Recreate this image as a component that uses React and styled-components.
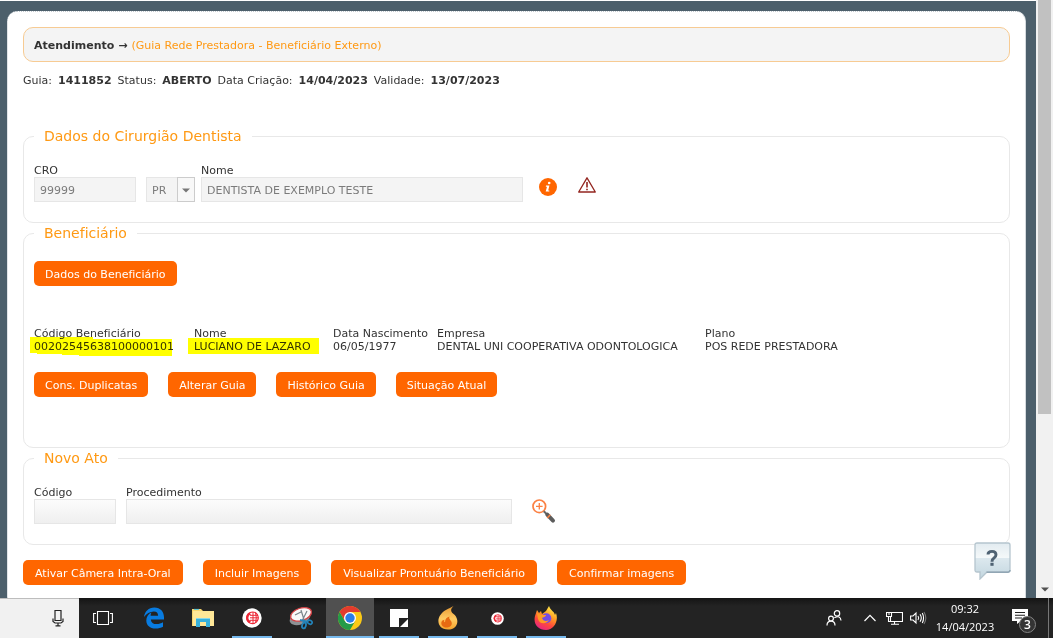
import React from "react";
import styled, { createGlobalStyle } from "styled-components";

const GlobalStyle = createGlobalStyle`
  * { box-sizing: border-box; }
  body { margin: 0; background: #4c5f6b; }
  body, button, input, select {
    font-family: "DejaVu Sans", Verdana, sans-serif;
    font-size: 11px;
    font-variant-ligatures: none;
    line-height: 13px;
    color: #333;
  }
`;

const Desktop = styled.div`
  display: grid;
  grid-template-rows: minmax(0, 1fr) 40px;
  height: 100vh;
`;

const Browser = styled.div`
  display: flex;
  min-height: 0;
`;

const Viewport = styled.div`
  position: relative;
  flex: 1;
  min-width: 0;
  overflow: hidden;
  padding: 10px 10px 0 7px;
  border-top: 1px solid #fff;
  background: #4c5f6b;
`;

const Sheet = styled.main`
  min-height: 100%;
  padding: 15px 15px 13px;
  border: 1px dotted #c3cad0;
  border-right: 1px solid #d5dade;
  border-bottom: 0;
  border-radius: 10px 10px 0 0;
  background: #fff;
`;

const TitleBar = styled.h1`
  display: flex;
  align-items: center;
  gap: 4px;
  height: 35px;
  margin: 0;
  padding: 2px 10px 0;
  border: 1px solid #f7cb93;
  border-radius: 10px;
  background: #f4f4f4;
  font-size: 11px;
`;

const Crumb = styled.span`
  color: #ff9913;
  font-weight: 400;
`;

const StatusLine = styled.p`
  display: flex;
  gap: 6px;
  margin: 12px 0 41px;
`;

const Group = styled.fieldset`
  min-width: 0;
  margin: 0 0 ${(p) => p.$after || 2}px;
  padding: 19px 10px ${(p) => p.$bottom || 20}px;
  border: 1px solid #e8e8e8;
  border-radius: 10px;
`;

const Legend = styled.legend`
  padding: 0 10px;
  color: #ff9913;
  font-size: 14px;
  line-height: 17px;
`;

const FieldRow = styled.div`
  display: flex;
  align-items: flex-end;
`;

const Field = styled.label`
  display: block;
  width: ${(p) => p.$width}px;
  margin-right: ${(p) => p.$after || 0}px;
`;

const TextBox = styled.input`
  display: block;
  width: 100%;
  height: 25px;
  padding: 2px 5px 0;
  border: 1px solid #e6e6e6;
  border-radius: 0;
  background: ${(p) => (p.disabled ? "#f4f4f4" : "linear-gradient(#fcfcfc, #efefef)")};
  color: #7b7b7b;
`;

const SelectFrame = styled.div`
  position: relative;
  width: 49px;
  margin-right: 6px;
`;

const Select = styled.select`
  display: block;
  appearance: none;
  width: 100%;
  height: 25px;
  padding: 2px 20px 0 5px;
  border: 1px solid #e6e6e6;
  border-radius: 0;
  background: #f4f4f4;
  color: #7b7b7b;
  opacity: 1;
`;

const SelectArrow = styled.span`
  position: absolute;
  inset: 0 0 0 auto;
  display: grid;
  place-items: center;
  width: 18px;
  padding-top: 2px;
  border: 1px solid #ccc;
  background: #f8f8f8;
  pointer-events: none;
`;

const IconButton = styled.button`
  display: block;
  height: 25px;
  padding: 0;
  border: 0;
  background: none;
  margin-left: ${(p) => p.$before || 0}px;

  svg { display: block; }
`;

const ActionRow = styled.div`
  display: flex;
  gap: 20px;
`;

const Action = styled.button`
  height: 25px;
  padding: ${(p) => (p.$wide ? "2px 12px 0" : "1px 11px 0")};
  border: 0;
  border-radius: 5px;
  background: #ff6600;
  color: #fff;
  white-space: nowrap;
`;

const Patient = styled.table`
  margin: 41px 0 19px;
  border-collapse: collapse;
  table-layout: fixed;
  width: 820px;

  th, td {
    padding: 0;
    font-weight: 400;
    text-align: left;
    white-space: nowrap;
  }
`;

const Marked = styled.span`
  position: relative;
`;

const MarkerInk = styled.svg`
  position: absolute;
  left: -6px;
  top: -3px;
  mix-blend-mode: multiply;
`;

const HelpButton = styled.button`
  position: absolute;
  right: 25px;
  bottom: 18px;
  padding: 0;
  border: 0;
  background: none;

  svg { display: block; }
`;

const ScrollTrack = styled.div`
  display: flex;
  flex-direction: column;
  justify-content: space-between;
  align-items: center;
  width: 17px;
  padding-bottom: 6px;
  background: #f1f1f1;
`;

const ScrollThumb = styled.div`
  width: 13px;
  height: 70%;
  background: #c1c1c1;
`;

const Taskbar = styled.footer`
  display: flex;
  background: linear-gradient(#141414, #232323 8px);
  color: #fff;
`;

const SearchEnd = styled.div`
  display: flex;
  align-items: center;
  justify-content: flex-end;
  width: 79px;
  padding-right: 15px;
  border-top: 1px solid #bdbdbd;
  background: #f1f1f1;
`;

const TaskList = styled.nav`
  display: flex;
  flex: 1;
  gap: 1px;
`;

const Task = styled.button`
  display: grid;
  place-items: center;
  width: 48px;
  padding: 0;
  margin-right: ${(p) => p.$after || 0}px;
  border: 0;
  background: ${(p) => (p.$active ? "#505050" : "none")};
  background-image: ${(p) => (p.$open || p.$active ? "linear-gradient(#76b9ed, #76b9ed)" : "none")};
  background-repeat: no-repeat;
  background-position: center bottom;
  background-size: ${(p) => (p.$active ? 48 : 40)}px 2px;
`;

const Tray = styled.div`
  display: flex;
  align-items: center;
  padding-right: 4px;
`;

const TrayButton = styled.button`
  display: grid;
  place-items: center;
  width: ${(p) => p.$width}px;
  height: 40px;
  padding: ${(p) => p.$drop || 0}px 0 0;
  border: 0;
  background: none;
`;

const Clock = styled.time`
  width: 70px;
  font-family: "Open Sans", "Noto Sans", sans-serif;
  font-size: 11px;
  line-height: 18px;
  text-align: center;
`;

const DesktopEdge = styled.span`
  width: 1px;
  height: 40px;
  background: #777;
`;

const InfoIcon = () => (
  <svg width="18" height="25" viewBox="0 0 18 25">
    <circle cx="9" cy="10" r="9" fill="#ff6600" />
    <circle cx="10.2" cy="6" r="1.3" fill="#fff" />
    <path d="M7 8.5H10.4L9.2 13.4H10.3V14.6H6.7L8 9.7H6.8Z" fill="#fff" />
  </svg>
);

const AlertIcon = () => (
  <svg width="18" height="25" viewBox="0 0 18 25" fill="none" stroke="#93251f">
    <path d="M9 .8L17.3 15H.7Z" strokeWidth="1.3" strokeLinejoin="round" />
    <path d="M9 5V10.5M9 11.8V13.3" strokeWidth="1.6" />
  </svg>
);

const MagnifierIcon = () => (
  <svg width="24" height="25" viewBox="0 0 24 25" fill="none">
    <circle cx="7.3" cy="7.3" r="6.3" stroke="#fb8144" strokeWidth="1.7" />
    <path d="M4 7.3H10.6M7.3 4V10.6" stroke="#fb8144" strokeWidth="1.3" />
    <path d="M11.8 12.2L15 15.4" stroke="#656565" strokeWidth="2" />
    <path d="M15.3 15.7L21 21.6" stroke="#5c5c5c" strokeWidth="4" strokeLinecap="round" />
    <path d="M18.3 15.8L15.2 19" stroke="#fb8144" strokeWidth="1.5" />
  </svg>
);

const HelpIcon = () => (
  <svg width="37" height="38" viewBox="0 0 37 38">
    <defs>
      <linearGradient id="bubble" x1="0" y1="0" x2="0" y2="1">
        <stop offset="0" stopColor="#e2ebf0" />
        <stop offset=".42" stopColor="#f5f9fa" />
        <stop offset=".43" stopColor="#dce8ee" />
        <stop offset="1" stopColor="#c2d6df" />
      </linearGradient>
    </defs>
    <path
      d="M3 1H34Q36 1 36 3V28Q36 30 34 30H13L6 37V30H3Q1 30 1 28V3Q1 1 3 1Z"
      fill="url(#bubble)"
      stroke="#b5c5ce"
      strokeWidth="1.3"
    />
    <path d="M12.5 30.2H34Q36 30 36 28" fill="none" stroke="#91a6b4" strokeWidth="1.4" />
    <path
      d="M14 12.6Q14 9.4 18 9.4Q22 9.4 22 12.7Q22 14.6 20 16Q18 17.3 18 19.7"
      fill="none"
      stroke="#4f6273"
      strokeWidth="2.9"
    />
    <rect x="16.4" y="20.8" width="3.2" height="3" fill="#4f6273" />
  </svg>
);

const Arrow = ({ fill }) => (
  <svg width="8" height="5" viewBox="0 0 8 5">
    <path d="M0 .5H8L4 4.5Z" fill={fill} />
  </svg>
);

const MicIcon = () => (
  <svg width="12" height="18" viewBox="0 0 12 18" fill="none" stroke="#222" strokeWidth="1.2">
    <path d="M3 .5H9V10.5H3ZM1 8.5V11.5L3 13H9L11 11.5V8.5M6 13V15.5M3.5 15.8H8.5" />
  </svg>
);

const TaskViewIcon = () => (
  <svg width="20" height="16" viewBox="0 0 20 16" fill="none" stroke="#fff" strokeWidth="1.1">
    <path d="M4.5 1.5H15.5V14.5H4.5ZM3 3.5H.6V12.5H3M17 3.5H19.4V12.5H17" />
  </svg>
);

const EdgeIcon = () => (
  <svg width="22" height="22" viewBox="0 0 22 22">
    <path
      d="M1 10C1.7 4.2 5.7.4 11.3.4C17.5.4 21 4.7 21 10.2V12.4H7.8C8 15.5 10.3 17.1 13.6 17.1C16 17.1 18.2 16.4 20 15.3V19.8C18 20.9 15.5 21.6 12.6 21.6C6.9 21.6 3.3 18.3 3.3 13.5C3.3 9.8 5.2 7 8.5 5.5C7.9 6.4 7.6 7.4 7.6 8.7H15.1C15.1 6 13.7 4.5 10.8 4.5C7 4.5 3.4 6.6 1 10Z"
      fill="#087be0"
    />
  </svg>
);

const FolderIcon = () => (
  <svg width="22" height="20" viewBox="0 0 22 20">
    <path d="M0 1H9L11 3H22V18H0Z" fill="#f8d56d" />
    <path d="M1 3H22V18H1Z" fill="#ffe797" />
    <path d="M2 1.4H7" stroke="#4fc1dc" strokeWidth="1" />
    <path d="M4 10H18V19H14V14H8V19H4Z" fill="#38b1dc" />
    <path d="M4 10H18V11H4Z" fill="#8bd8e8" />
  </svg>
);

const GlobeBadge = ({ size }) => (
  <svg width={size} height={size} viewBox="0 0 20 20" fill="none" stroke="#ed2736">
    <circle cx="10" cy="10" r="9.7" fill="#fff" stroke="none" />
    <circle cx="10.5" cy="9.8" r="5.8" strokeWidth="1.2" />
    <path d="M11 4V15.6M8 7.3H16M8 9.8H16.3M8 12.3H16M13.6 5Q15 9.8 13.6 14.6" />
    <path d="M7.4 4.4C3 6.5 3 13 7.4 15.2L9 13L7 12Q5.8 9.8 7 7.6L9 6.6Z" fill="#ed2736" stroke="none" />
  </svg>
);

const SnipIcon = () => (
  <svg width="24" height="24" viewBox="0 0 24 24" fill="none">
    <ellipse cx="11" cy="12" rx="10.8" ry="6.4" fill="#8d9295" transform="rotate(-22 11 12)" />
    <ellipse cx="12" cy="8.4" rx="10.8" ry="6.2" fill="#f8f8f8" stroke="#d44144" strokeWidth="1.3" transform="rotate(-18 12 8.4)" />
    <path d="M6 9L12 6M12 4L15.4 15M18 5L13 15" stroke="#7a858b" strokeWidth="1.2" />
    <path d="M11 14L19 16" stroke="#2384bb" strokeWidth="2" />
    <ellipse cx="15" cy="19.5" rx="1.9" ry="2.9" stroke="#2384bb" strokeWidth="1.8" transform="rotate(15 15 19.5)" />
    <ellipse cx="20.8" cy="16.2" rx="2.4" ry="1.8" stroke="#2384bb" strokeWidth="1.7" transform="rotate(28 20.8 16.2)" />
  </svg>
);

const ChromeIcon = () => (
  <svg width="24" height="24" viewBox="0 0 24 24">
    <circle cx="12" cy="12" r="12" fill="#fbc916" />
    <path d="M1.6 6A12 12 0 0 1 22.4 6H12L7 15Z" fill="#e33b2e" />
    <path d="M1.6 6A12 12 0 0 0 12 24L17.2 15L12 17L6.8 15Z" fill="#249b48" />
    <circle cx="12" cy="12" r="6" fill="#fff" />
    <circle cx="12" cy="12" r="4.7" fill="#2b7de9" />
  </svg>
);

const NotesIcon = () => (
  <svg width="18" height="18" viewBox="0 0 18 18">
    <path d="M0 0H18V18H0Z" fill="#fff" />
    <path d="M9 9H18V10L10 18H9Z" fill="#222" />
  </svg>
);

const FlameIcon = () => (
  <svg width="20" height="24" viewBox="0 0 20 24">
    <defs>
      <linearGradient id="flame" x1="0" y1="0" x2="0" y2="1">
        <stop offset="0" stopColor="#e99a32" />
        <stop offset=".55" stopColor="#ffcb63" />
        <stop offset="1" stopColor="#f5a32b" />
      </linearGradient>
    </defs>
    <path d="M15.5 0C11.5 4 13 6 16.8 9C22 15 19 23.5 10 23.5C.5 23.5-1.5 15 2 9.5C5.5 4 11 3 15.5 0Z" fill="url(#flame)" />
    <path d="M11.5 10.5C10 13 14 14.5 13.8 17.5C13.5 22.5 5 23 3.5 18.5C2.8 15.5 4.5 14 6.5 13.8C5.8 15 6 16 7 16.3C7 13 9 11 11.5 10.5Z" fill="#e66a12" />
  </svg>
);

const FirefoxIcon = () => (
  <svg width="24" height="24" viewBox="0 0 24 24">
    <defs>
      <linearGradient id="fox" x1=".8" y1="0" x2=".3" y2="1">
        <stop offset="0" stopColor="#fff44f" />
        <stop offset=".4" stopColor="#ff9c22" />
        <stop offset=".7" stopColor="#ff483d" />
        <stop offset="1" stopColor="#e62486" />
      </linearGradient>
    </defs>
    <path d="M3 4L5 7L7 5L8 8L12 5L15 0C17 5 20 5 21 9L22 7C25 15 20 24 12 24C4 24-1 18 1 10Z" fill="url(#fox)" />
    <circle cx="12.3" cy="12.3" r="5" fill="#754be4" />
    <path d="M3 7L8 9L12 9C12 11 9 11 8 12C9 15 12 16 15 14C12 19 5 18 4 13Z" fill="#ff9b24" />
  </svg>
);

const PeopleIcon = () => (
  <svg width="16" height="16" viewBox="0 0 16 16" fill="none" stroke="#fff" strokeWidth="1.2">
    <circle cx="11" cy="3.4" r="2.7" />
    <circle cx="5" cy="8.6" r="2.4" />
    <path d="M1 15.5Q1 11.2 5 11.2Q9 11.2 9 15.5M8.3 7.8Q14.5 4.8 15 10.5" />
  </svg>
);

const ChevronIcon = () => (
  <svg width="12" height="8" viewBox="0 0 12 8" fill="none" stroke="#fff" strokeWidth="1.2">
    <path d="M.5 7L6 1.4L11.5 7" />
  </svg>
);

const NetworkIcon = () => (
  <svg width="17" height="14" viewBox="0 0 17 14" fill="none" stroke="#fff">
    <path d="M6 1.5H16.5V10.5H4.5V6M.5 1.5H5.5V5.5H.5ZM2.5 5.5V10.5H5M8.5 10.5V13M5 13.2H13" strokeWidth="1.1" />
    <path d="M2 3H4" />
  </svg>
);

const VolumeIcon = () => (
  <svg width="17" height="14" viewBox="0 0 17 14" fill="none" stroke="#fff" strokeWidth="1.1">
    <path d="M.6 5H3L6 2V12L3 9H.6ZM8 5Q9.4 7 8 9M10 3.3Q12.6 7 10 10.7" />
    <path d="M12.3 2Q14.8 7 12.3 12" />
    <path d="M14 1Q17.6 7 14 13" stroke="#777" />
  </svg>
);

const NotificationIcon = () => (
  <svg width="25" height="25" viewBox="0 0 25 25">
    <path d="M0 1H16V13H9L5 16V13H0Z" fill="#fff" />
    <path d="M3 4.5H13M3 7.2H13M3 10H10" stroke="#222" strokeWidth="1.1" />
    <circle cx="15.5" cy="16.5" r="8" fill="#343434" stroke="#858585" />
    <text x="15.5" y="21" fill="#fff" fontFamily="Open Sans, sans-serif" fontSize="12" fontWeight="600" textAnchor="middle">3</text>
  </svg>
);

const bottomActions = [
  "Ativar Câmera Intra-Oral",
  "Incluir Imagens",
  "Visualizar Prontuário Beneficiário",
  "Confirmar imagens",
];
const guideActions = ["Cons. Duplicatas", "Alterar Guia", "Histórico Guia", "Situação Atual"];

export default function App() {
  return (
    <>
      <GlobalStyle />
      <Desktop>
        <Browser>
          <Viewport>
            <Sheet>
              <TitleBar>
                <span>Atendimento</span>
                <span>→</span>
                <Crumb>(Guia Rede Prestadora - Beneficiário Externo)</Crumb>
              </TitleBar>
              <StatusLine>
                <span>Guia:</span>
                <b>1411852</b>
                <span>Status:</span>
                <b>ABERTO</b>
                <span>Data Criação:</span>
                <b>14/04/2023</b>
                <span>Validade:</span>
                <b>13/07/2023</b>
              </StatusLine>

              <Group>
                <Legend>Dados do Cirurgião Dentista</Legend>
                <FieldRow>
                  <Field $width={102} $after={10}>
                    CRO
                    <TextBox disabled defaultValue="99999" />
                  </Field>
                  <SelectFrame>
                    <Select disabled aria-label="UF" defaultValue="PR">
                      <option>PR</option>
                    </Select>
                    <SelectArrow>
                      <Arrow fill="#777" />
                    </SelectArrow>
                  </SelectFrame>
                  <Field $width={322}>
                    Nome
                    <TextBox disabled defaultValue="DENTISTA DE EXEMPLO TESTE" />
                  </Field>
                  <IconButton $before={16} aria-label="Informações"><InfoIcon /></IconButton>
                  <IconButton $before={21} aria-label="Alerta"><AlertIcon /></IconButton>
                </FieldRow>
              </Group>

              <Group $bottom={50}>
                <Legend>Beneficiário</Legend>
                <ActionRow>
                  <Action>Dados do Beneficiário</Action>
                </ActionRow>
                <Patient>
                  <colgroup>
                    <col width="160" />
                    <col width="139" />
                    <col width="104" />
                    <col width="268" />
                    <col />
                  </colgroup>
                  <thead>
                    <tr>
                      <th>Código Beneficiário</th>
                      <th>Nome</th>
                      <th>Data Nascimento</th>
                      <th>Empresa</th>
                      <th>Plano</th>
                    </tr>
                  </thead>
                  <tbody>
                    <tr>
                      <td>
                        <Marked>
                          <MarkerInk width="146" height="20" viewBox="0 0 146 20">
                            <path d="M2 0H65V2H144V19H51V18H34V17H9V16H2Z" fill="#ff0" />
                          </MarkerInk>
                          00202545638100000101
                        </Marked>
                      </td>
                      <td>
                        <Marked>
                          <MarkerInk width="131" height="20" viewBox="0 0 131 20">
                            <path d="M0 1H131V17H0Z" fill="#ff0" />
                          </MarkerInk>
                          LUCIANO DE LAZARO
                        </Marked>
                      </td>
                      <td>06/05/1977</td>
                      <td>DENTAL UNI COOPERATIVA ODONTOLOGICA</td>
                      <td>POS REDE PRESTADORA</td>
                    </tr>
                  </tbody>
                </Patient>
                <ActionRow>
                  {guideActions.map((label) => <Action key={label}>{label}</Action>)}
                </ActionRow>
              </Group>

              <Group $after={15}>
                <Legend>Novo Ato</Legend>
                <FieldRow>
                  <Field $width={82} $after={10}>
                    Código
                    <TextBox />
                  </Field>
                  <Field $width={386}>
                    Procedimento
                    <TextBox />
                  </Field>
                  <IconButton $before={20} aria-label="Pesquisar procedimento"><MagnifierIcon /></IconButton>
                </FieldRow>
              </Group>

              <ActionRow>
                {bottomActions.map((label) => <Action $wide key={label}>{label}</Action>)}
              </ActionRow>
            </Sheet>
            <HelpButton aria-label="Ajuda"><HelpIcon /></HelpButton>
          </Viewport>
          <ScrollTrack>
            <ScrollThumb />
            <Arrow fill="#505050" />
          </ScrollTrack>
        </Browser>

        <Taskbar>
          <SearchEnd><MicIcon /></SearchEnd>
          <TaskList aria-label="Aplicativos">
            <Task $after={2} aria-label="Visão de tarefas"><TaskViewIcon /></Task>
            <Task aria-label="Edge"><EdgeIcon /></Task>
            <Task aria-label="Arquivos"><FolderIcon /></Task>
            <Task $open aria-label="Discador"><GlobeBadge size={20} /></Task>
            <Task aria-label="Ferramenta de captura"><SnipIcon /></Task>
            <Task $active aria-label="Chrome"><ChromeIcon /></Task>
            <Task $open aria-label="Notas"><NotesIcon /></Task>
            <Task $open aria-label="Chat"><FlameIcon /></Task>
            <Task $open aria-label="Telefone"><GlobeBadge size={13} /></Task>
            <Task $open aria-label="Firefox"><FirefoxIcon /></Task>
          </TaskList>
          <Tray>
            <TrayButton $width={48} aria-label="Pessoas"><PeopleIcon /></TrayButton>
            <TrayButton $width={24} aria-label="Ícones ocultos"><ChevronIcon /></TrayButton>
            <TrayButton $width={24} aria-label="Rede"><NetworkIcon /></TrayButton>
            <TrayButton $width={24} aria-label="Volume"><VolumeIcon /></TrayButton>
            <Clock>09:32<br />14/04/2023</Clock>
            <TrayButton $width={48} $drop={4} aria-label="Notificações"><NotificationIcon /></TrayButton>
            <DesktopEdge />
          </Tray>
        </Taskbar>
      </Desktop>
    </>
  );
}
